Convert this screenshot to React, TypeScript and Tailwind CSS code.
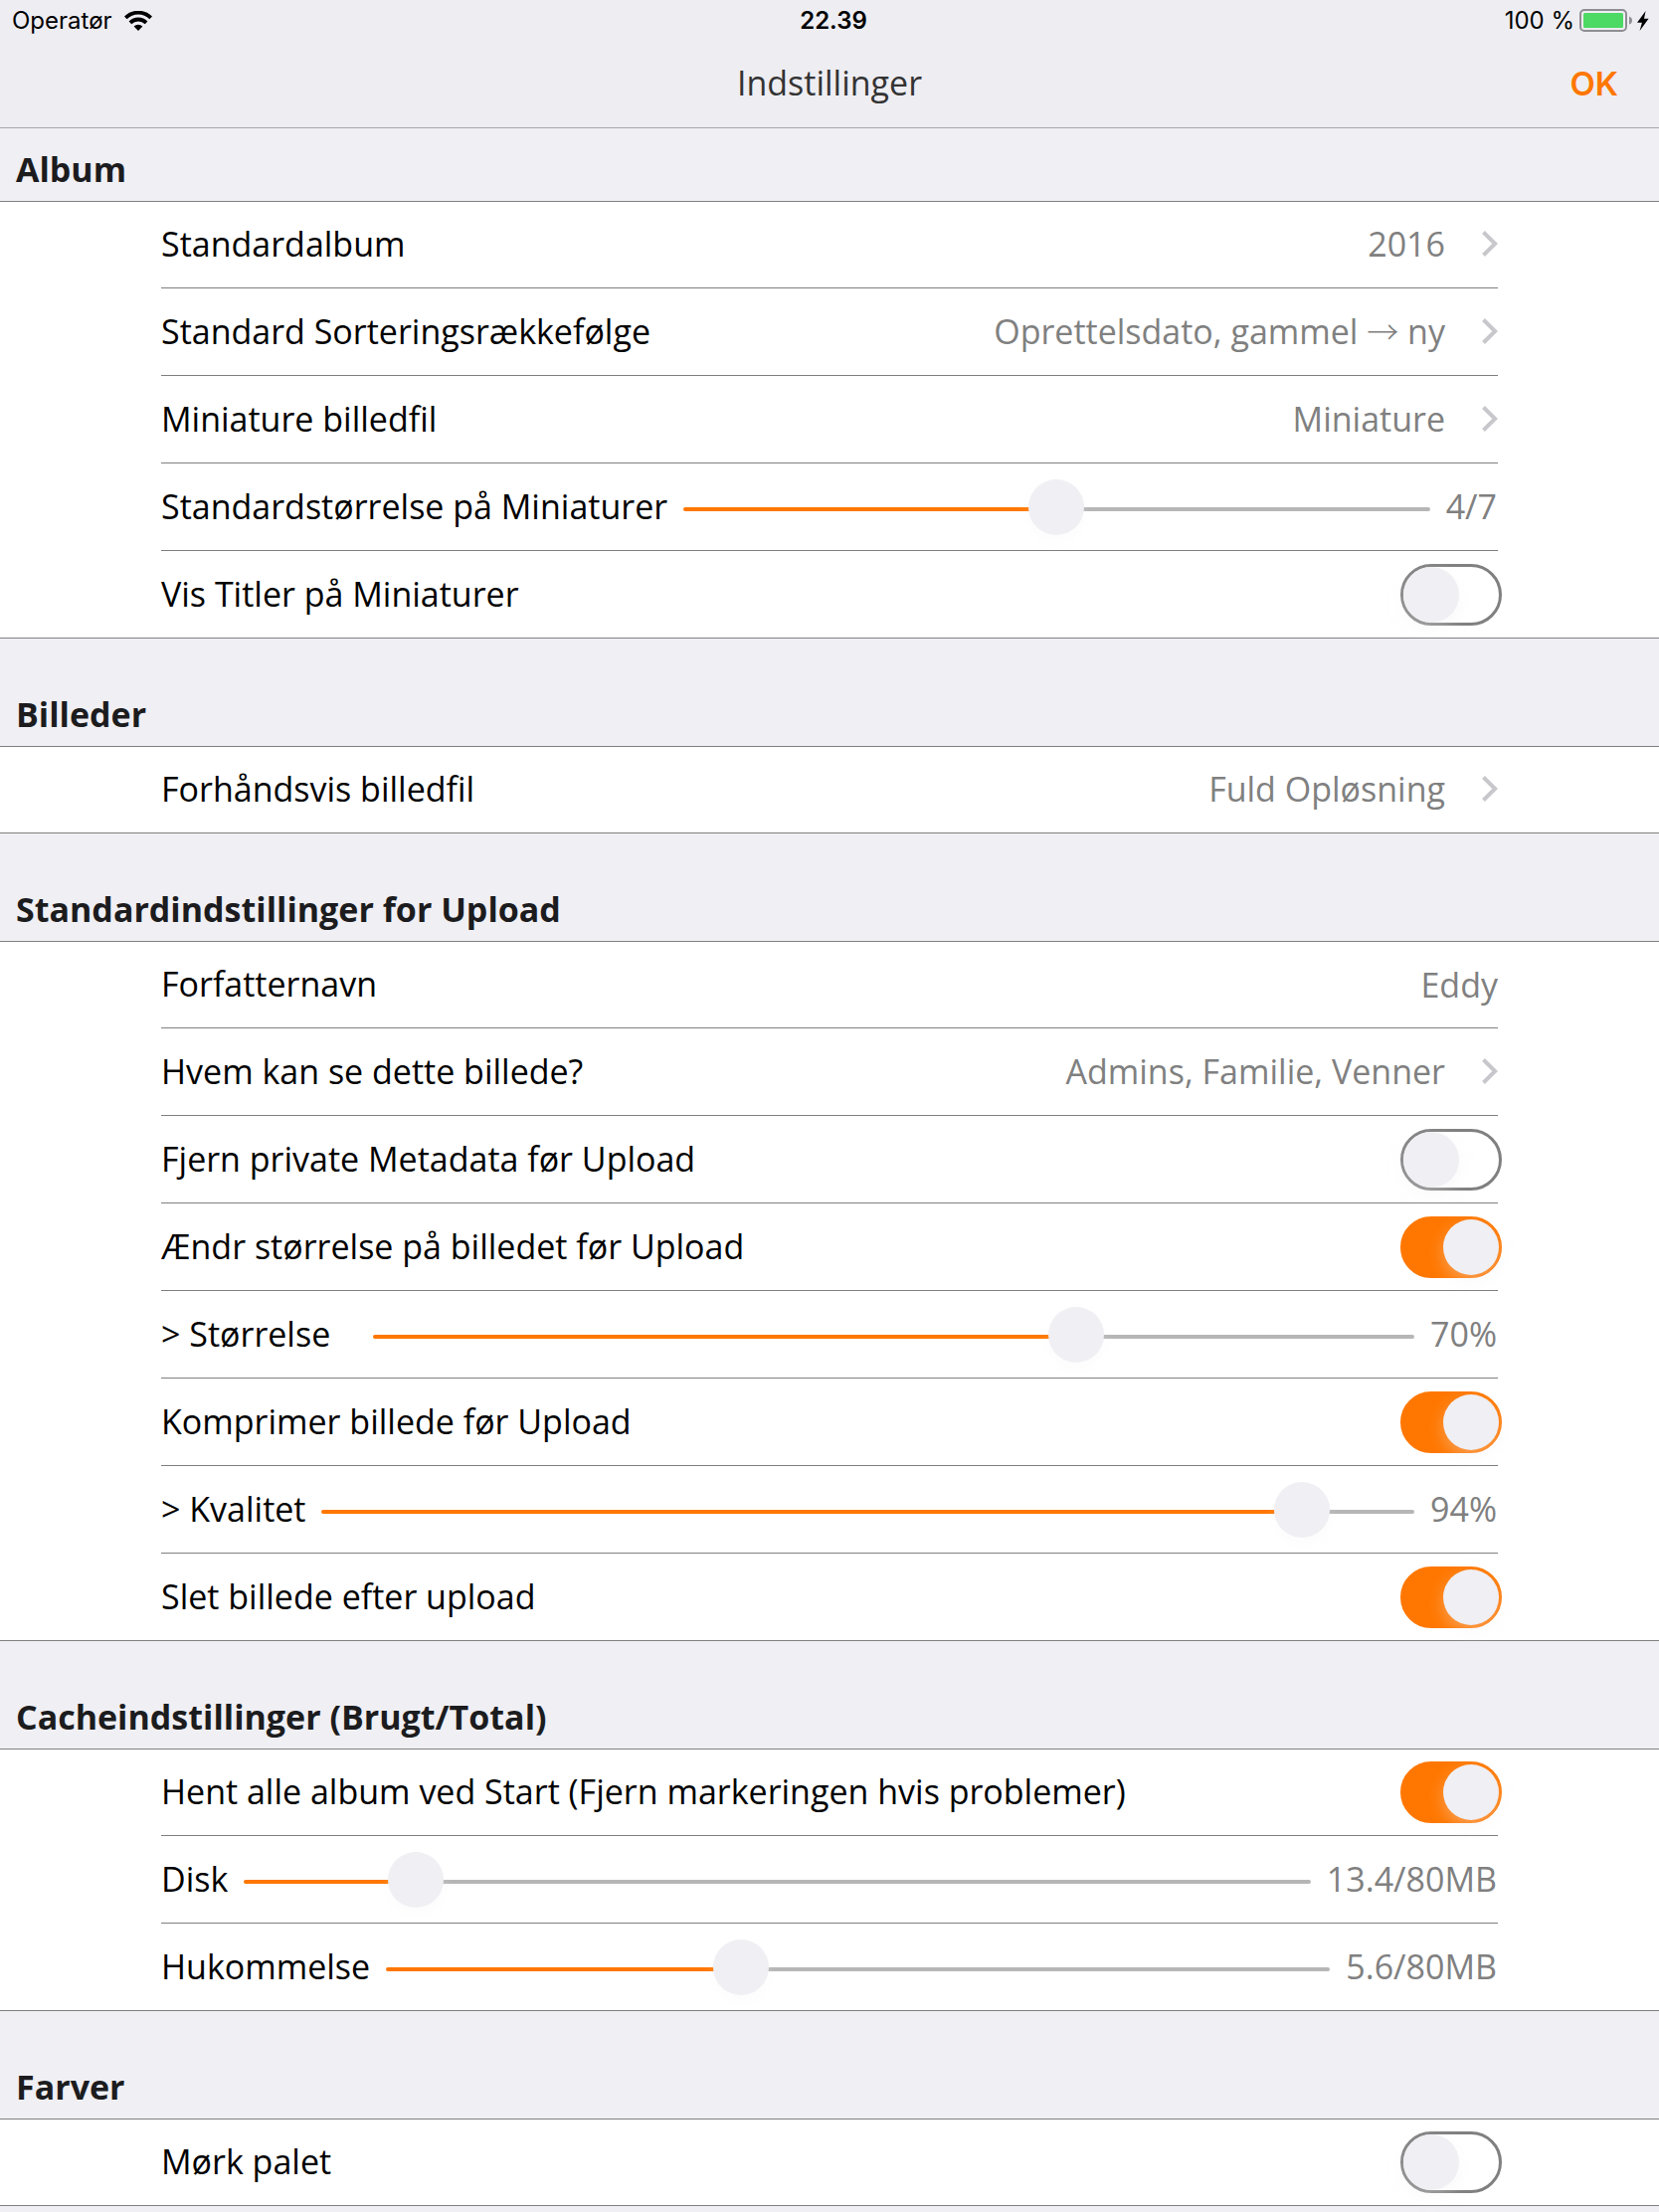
import { useState, type ReactNode } from "react";

function Row({ children }: { children: ReactNode }) {
  return (
    <li className="flex h-[88px] items-center border-t border-[#808080] first:h-[86px] first:border-t-0">
      {children}
    </li>
  );
}

function Section({ title, children }: { title: string; children: ReactNode }) {
  return (
    <section className="not-first:pt-[35px]">
      <h2 className="px-4 pt-[18px] pb-2 text-[34px] leading-[47px] font-bold text-[#1c1c1e]">{title}</h2>
      <ul className="border-y border-[#808080] bg-white px-[162px]">{children}</ul>
    </section>
  );
}

function Chevron() {
  return (
    <svg viewBox="0 0 16 26" className="h-[26px] w-4 shrink-0" fill="none" stroke="#c7c7cc" strokeWidth="4">
      <path d="M1.5 1.5 13.2 13 1.5 24.5" />
    </svg>
  );
}

function LinkRow({ label, value }: { label: string; value: ReactNode }) {
  return (
    <Row>
      <button type="button" className="flex h-full w-full items-center pb-0.5">
        <span className="flex-1 text-left">{label}</span>
        <span className="mr-[37px] text-[#808080]">{value}</span>
        <Chevron />
      </button>
    </Row>
  );
}

function SwitchRow({ label, on = false }: { label: string; on?: boolean }) {
  const [checked, setChecked] = useState(on);
  return (
    <Row>
      <label className="-mr-1 flex h-full flex-1 items-center justify-between">
        <span className="pb-0.5">{label}</span>
        <input
          type="checkbox"
          role="switch"
          checked={checked}
          onChange={(e) => setChecked(e.target.checked)}
          className="h-[62px] w-[102px] shrink-0 appearance-none rounded-full border-[3px] border-[#808080] bg-white before:block before:size-14 before:rounded-full before:bg-[#efeff4] before:shadow-[0_6px_16px_rgba(239,239,244,0.35)] checked:border-[#ff7700] checked:bg-[#ff7700] checked:before:ml-10"
        />
      </label>
    </Row>
  );
}

type SliderProps = { id: string; label: string; value: string; percent: number; wide?: boolean };

function SliderRow({ id, label, value, percent, wide = false }: SliderProps) {
  const [position, setPosition] = useState(percent);
  return (
    <Row>
      <label htmlFor={id} className={wide ? "mr-[43px] pb-0.5" : "mr-4 pb-0.5"}>
        {label}
      </label>
      <input
        id={id}
        type="range"
        min={0}
        max={100}
        step={0.1}
        value={position}
        onChange={(e) => setPosition(Number(e.target.value))}
        style={{ backgroundImage: `linear-gradient(to right, #ff7700 ${position}%, #b6b6b6 ${position}%)` }}
        className="mt-[5px] h-1 min-w-0 flex-1 appearance-none rounded-full [&::-webkit-slider-runnable-track]:h-1 [&::-webkit-slider-thumb]:-mt-7 [&::-webkit-slider-thumb]:size-14 [&::-webkit-slider-thumb]:appearance-none [&::-webkit-slider-thumb]:rounded-full [&::-webkit-slider-thumb]:bg-[#efeff4] [&::-webkit-slider-thumb]:shadow-[0_6px_12px_rgba(239,239,244,0.2)]"
      />
      <output htmlFor={id} className="mr-px ml-4 pb-0.5 text-[#808080]">
        {value}
      </output>
    </Row>
  );
}

function StatusBar() {
  return (
    <div className="grid h-[42px] grid-cols-3 items-center px-[10px] font-[Inter,sans-serif] text-[24px] leading-8 text-black">
      <div className="flex items-center gap-3 pl-0.5">
        Operatør
        <svg viewBox="0 0 28 20" className="h-5 w-7" aria-label="Wi-Fi">
          <g fill="none" stroke="#000" strokeWidth="3.8">
            <path d="M1.3 6.9a18 18 0 0 1 25.4 0" />
            <path d="M5.9 11.9a11.4 11.4 0 0 1 16.2 0" />
          </g>
          <path d="M14 20 9.6 15.6a6.2 6.2 0 0 1 8.8 0Z" />
        </svg>
      </div>
      <time className="pl-2 text-center font-semibold">22.39</time>
      <div className="flex items-center justify-end">
        100 %
        <svg viewBox="0 0 54 24" className="ml-[5px] h-6 w-[54px]" aria-label="Batteri">
          <rect x="1" y="1" width="46" height="21" rx="4" fill="none" stroke="#8e8e93" strokeWidth="2" />
          <rect x="4" y="4" width="40" height="15" rx="1.5" fill="#4cd964" />
          <path d="M50 7.5q3 1 3 4t-3 4Z" fill="#8e8e93" />
        </svg>
        <svg viewBox="0 0 12 20" className="ml-1 h-5 w-3" aria-hidden="true">
          <path d="M8.6 0 0 11.8h4.9L2.6 20l9-12.2H7Z" />
        </svg>
      </div>
    </div>
  );
}

export default function App() {
  const [author, setAuthor] = useState("Eddy");
  return (
    <div className="min-h-screen bg-[#efeff4] font-['Open_Sans',sans-serif] text-[34px] leading-[46px] text-black">
      <header className="border-b border-[#a7a7aa] bg-[#eeedf2]">
        <StatusBar />
        <div className="grid h-[86px] grid-cols-[1fr_auto_1fr] items-center px-[41px] pb-1">
          <h1 className="col-start-2 text-[#333333]">Indstillinger</h1>
          <button
            type="button"
            className="justify-self-end pt-0.5 font-[Inter,sans-serif] text-[33px] font-semibold text-[#ff7700]"
          >
            OK
          </button>
        </div>
      </header>
      <main>
        <Section title="Album">
          <LinkRow label="Standardalbum" value="2016" />
          <LinkRow
            label="Standard Sorteringsrækkefølge"
            value={
              <>
                Oprettelsdato, gammel{" "}
                <span className="font-['Noto_Sans_CJK_JP',sans-serif] text-[32px] leading-none font-light">→</span> ny
              </>
            }
          />
          <LinkRow label="Miniature billedfil" value="Miniature" />
          <SliderRow id="thumbnail-size" label="Standardstørrelse på Miniaturer" value="4/7" percent={50} />
          <SwitchRow label="Vis Titler på Miniaturer" />
        </Section>
        <Section title="Billeder">
          <LinkRow label="Forhåndsvis billedfil" value="Fuld Opløsning" />
        </Section>
        <Section title="Standardindstillinger for Upload">
          <Row>
            <label htmlFor="author" className="pb-0.5">
              Forfatternavn
            </label>
            <input
              id="author"
              type="text"
              value={author}
              onChange={(e) => setAuthor(e.target.value)}
              className="min-w-0 flex-1 bg-transparent text-right text-[#808080]"
            />
          </Row>
          <LinkRow label="Hvem kan se dette billede?" value="Admins, Familie, Venner" />
          <SwitchRow label="Fjern private Metadata før Upload" />
          <SwitchRow label="Ændr størrelse på billedet før Upload" on />
          <SliderRow id="size" label="> Størrelse" value="70%" percent={68.5} wide />
          <SwitchRow label="Komprimer billede før Upload" on />
          <SliderRow id="quality" label="> Kvalitet" value="94%" percent={91.8} />
          <SwitchRow label="Slet billede efter upload" on />
        </Section>
        <Section title="Cacheindstillinger (Brugt/Total)">
          <SwitchRow label="Hent alle album ved Start (Fjern markeringen hvis problemer)" on />
          <SliderRow id="disk" label="Disk" value="13.4/80MB" percent={14.2} />
          <SliderRow id="memory" label="Hukommelse" value="5.6/80MB" percent={36.8} />
        </Section>
        <Section title="Farver">
          <SwitchRow label="Mørk palet" />
        </Section>
      </main>
    </div>
  );
}
